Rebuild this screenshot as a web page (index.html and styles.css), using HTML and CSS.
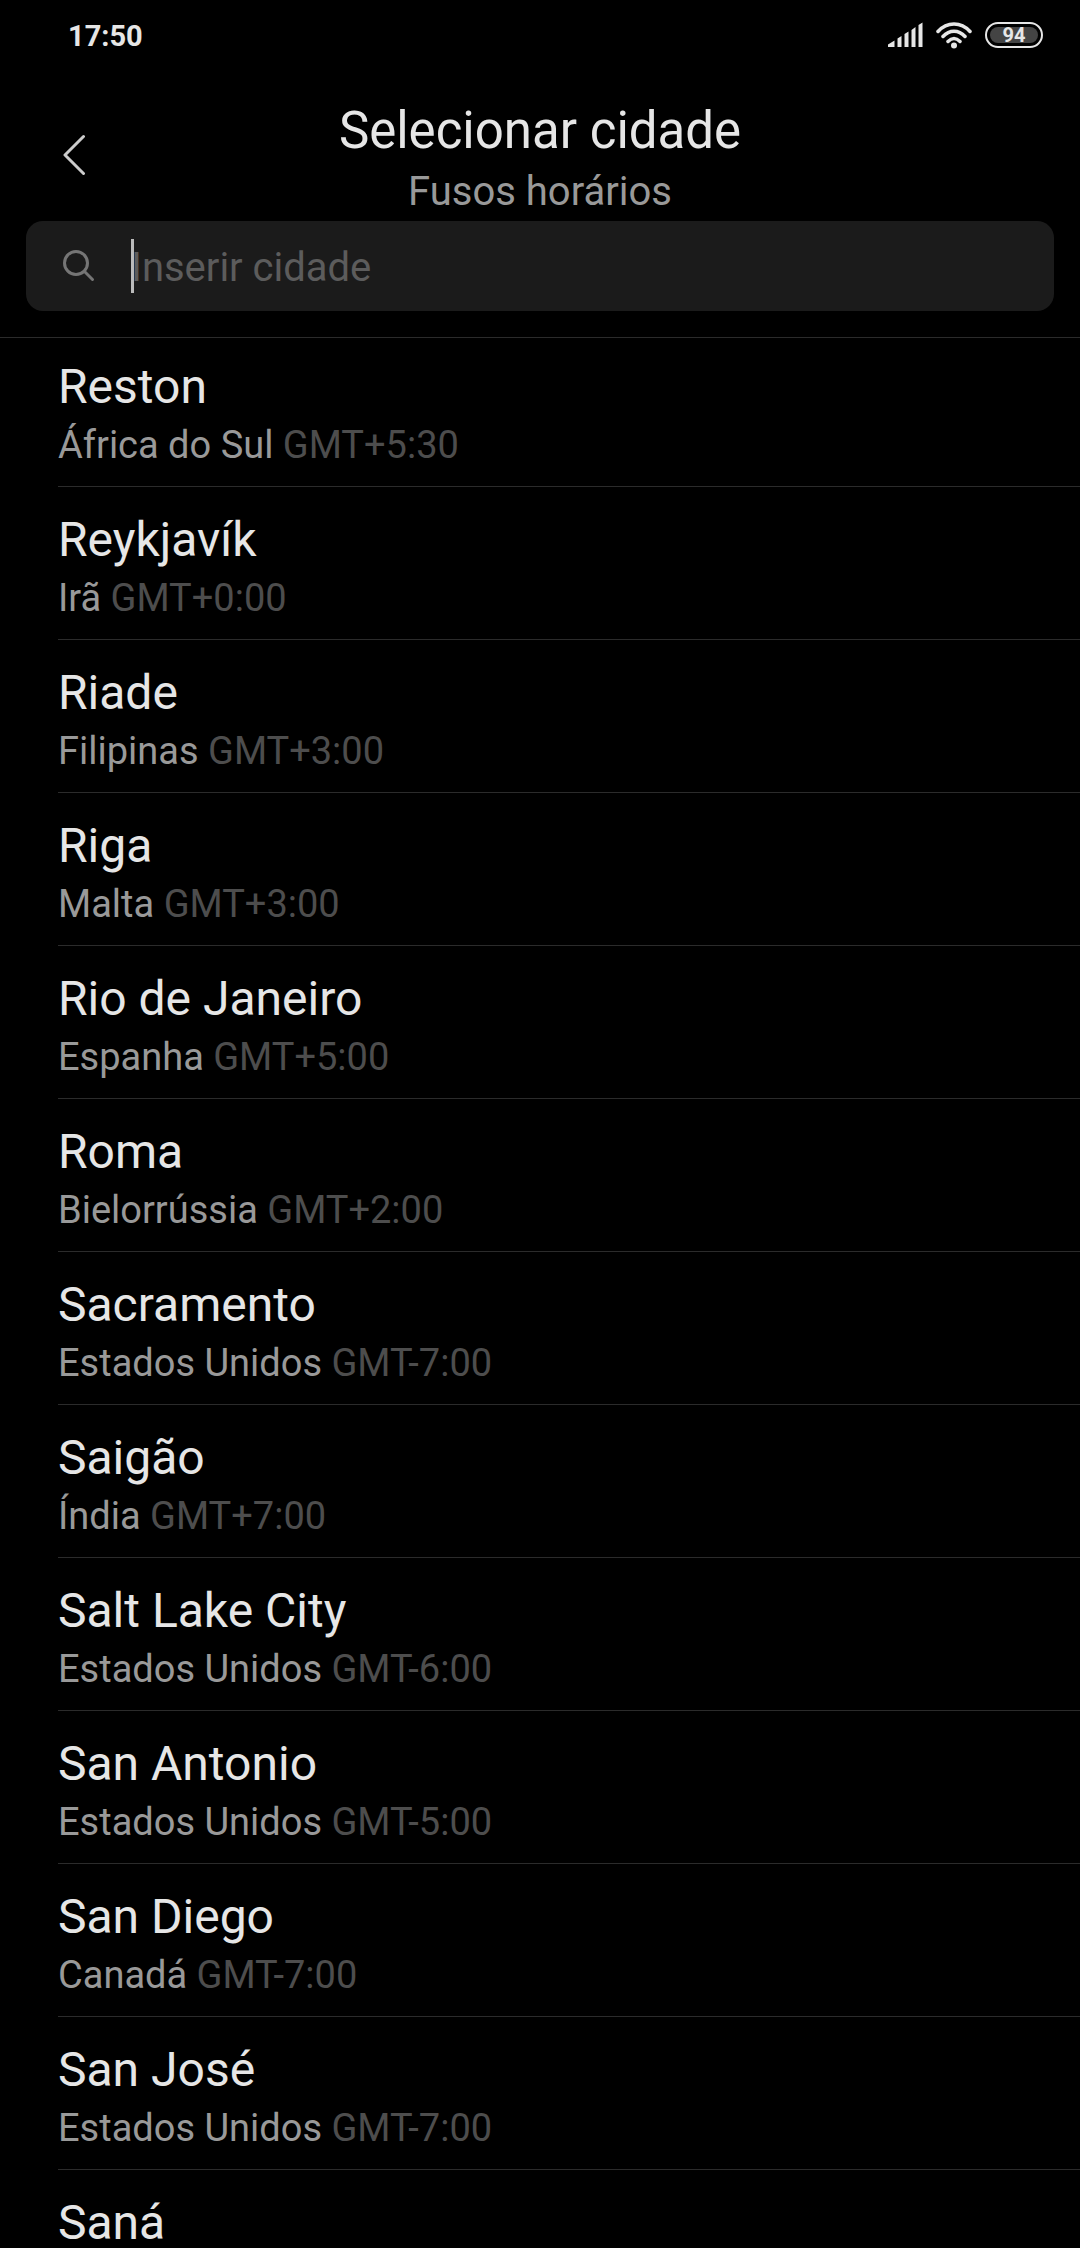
FILE: index.html
```html
<!DOCTYPE html>
<html lang="pt-BR">
<head>
<meta charset="utf-8">
<meta name="viewport" content="width=device-width, initial-scale=1">
<title>Selecionar cidade</title>
<link rel="stylesheet" href="styles.css">
</head>
<body>
<div class="app">
  <div class="status">
    <time class="clock">17:50</time>
    <div class="indicators">
      <svg class="signal" width="35" height="26" viewBox="0 0 35 26" aria-hidden="true"><path d="M0 25v-2.500l6.500-4V25zM9.500 25V16.500l4-2.500V25zM16.500 25V12l4-2.500V25zM23.500 25V8l4-3V25zM30.500 25V3l4-2.500V25z"/></svg>
      <svg class="wifi" width="36" height="27" viewBox="0 0 36 27" aria-hidden="true"><path d="M2 9.500C11-.5 25-.5 34 9.500M7 14.500c6.500-7 15.500-7 22 0M12 19.500c4-4 8-4 12 0"/><circle cx="18" cy="23.500" r="3"/></svg>
      <div class="battery"><span class="charge">94</span></div>
    </div>
  </div>
  <header class="header">
    <div class="bar">
      <button class="back" type="button" aria-label="Voltar">
        <svg width="24" height="42" viewBox="0 0 24 42" aria-hidden="true"><path d="M20.500 2.500L2 21l18.500 18.500"/></svg>
      </button>
      <div class="titles">
        <h1 class="title">Selecionar cidade</h1>
        <p class="subtitle">Fusos horários</p>
      </div>
    </div>
    <div class="search">
      <svg class="lens" width="32" height="32" viewBox="0 0 32 32" aria-hidden="true"><circle cx="13" cy="13" r="11.500"/><path d="M21.500 21.500l8 8"/></svg>
      <div class="field">
        <input class="input" type="text" placeholder="Inserir cidade" aria-label="Inserir cidade">
        <span class="caret"></span>
      </div>
    </div>
  </header>
  <main class="scroller">
    <ul class="cities">
      <li class="city"><h2 class="name">Reston</h2><p class="place">África do Sul <span class="zone">GMT+5:30</span></p></li>
      <li class="city"><h2 class="name">Reykjavík</h2><p class="place">Irã <span class="zone">GMT+0:00</span></p></li>
      <li class="city"><h2 class="name">Riade</h2><p class="place">Filipinas <span class="zone">GMT+3:00</span></p></li>
      <li class="city"><h2 class="name">Riga</h2><p class="place">Malta <span class="zone">GMT+3:00</span></p></li>
      <li class="city"><h2 class="name">Rio de Janeiro</h2><p class="place">Espanha <span class="zone">GMT+5:00</span></p></li>
      <li class="city"><h2 class="name">Roma</h2><p class="place">Bielorrússia <span class="zone">GMT+2:00</span></p></li>
      <li class="city"><h2 class="name">Sacramento</h2><p class="place">Estados Unidos <span class="zone">GMT-7:00</span></p></li>
      <li class="city"><h2 class="name">Saigão</h2><p class="place">Índia <span class="zone">GMT+7:00</span></p></li>
      <li class="city"><h2 class="name">Salt Lake City</h2><p class="place">Estados Unidos <span class="zone">GMT-6:00</span></p></li>
      <li class="city"><h2 class="name">San Antonio</h2><p class="place">Estados Unidos <span class="zone">GMT-5:00</span></p></li>
      <li class="city"><h2 class="name">San Diego</h2><p class="place">Canadá <span class="zone">GMT-7:00</span></p></li>
      <li class="city"><h2 class="name">San José</h2><p class="place">Estados Unidos <span class="zone">GMT-7:00</span></p></li>
      <li class="city"><h2 class="name">Saná</h2></li>
    </ul>
  </main>
</div>
</body>
</html>
```
FILE: styles.css
```css
* {
  box-sizing: border-box;
}

body,
h1,
h2,
p,
ul {
  margin: 0;
  padding: 0;
  font-weight: 400;
}

body {
  background: #000;
  color: #e6e6e6;
  font-family: Roboto, "Liberation Sans", sans-serif;
}

.app {
  display: flex;
  flex-direction: column;
  height: 100vh;
}

.status {
  display: flex;
  align-items: center;
  justify-content: space-between;
  height: 70px;
  padding: 0 37px 0 68px;
}

.clock {
  padding-top: 2px;
  font-size: 29px;
  line-height: 34px;
  font-weight: 700;
}

.indicators {
  display: flex;
  align-items: center;
  gap: 13px;
}

.signal {
  fill: #e6e6e6;
}

.wifi {
  fill: none;
  stroke: #e6e6e6;
  stroke-width: 3.500;
  stroke-linecap: round;
}

.wifi circle {
  fill: #e6e6e6;
  stroke: none;
}

.battery {
  display: flex;
  width: 58px;
  height: 26px;
  padding: 3px;
  border: 2px solid #e6e6e6;
  border-radius: 13px;
}

.charge {
  flex: 1;
  border-radius: 8px;
  background: #444;
  font-size: 20px;
  line-height: 16px;
  font-weight: 700;
  text-align: center;
}

.header {
  border-bottom: 1px solid #2b2b2b;
  padding: 30px 26px 26px;
}

.bar {
  display: grid;
  grid-template-columns: 72px 1fr 72px;
  align-items: start;
}

.back {
  display: flex;
  padding: 34px 0 0 37px;
  border: 0;
  background: none;
}

.back svg {
  flex: none;
  fill: none;
  stroke: #ccc;
  stroke-width: 3;
  stroke-linecap: round;
  stroke-linejoin: round;
}

.titles {
  text-align: center;
}

.title {
  font-size: 51px;
  line-height: 62px;
}

.subtitle {
  padding: 6px 0;
  color: #999;
  font-size: 40px;
  line-height: 47px;
}

.search {
  display: flex;
  align-items: center;
  gap: 36px;
  height: 90px;
  padding: 0 36px 0 37px;
  border-radius: 17px;
  background: #1b1b1b;
}

.lens {
  flex: none;
  fill: none;
  stroke: #757575;
  stroke-width: 3;
  stroke-linecap: round;
}

.field {
  position: relative;
  flex: 1;
}

.input {
  display: block;
  width: 100%;
  padding: 4px 0 0;
  border: 0;
  outline: 0;
  background: none;
  color: #e6e6e6;
  font: 40px/54px Roboto, "Liberation Sans", sans-serif;
}

.input::placeholder {
  color: #5c5c5c;
  opacity: 1;
}

.caret {
  position: absolute;
  top: 2px;
  left: 0;
  width: 3px;
  height: 54px;
  background: #bbb;
}

.scroller {
  flex: 1;
  min-height: 0;
  overflow-y: auto;
  scrollbar-width: none;
}

.cities {
  margin-top: -4px;
  list-style: none;
}

.city {
  min-height: 153px;
  margin-left: 58px;
  padding: 25px 0 18px;
  border-bottom: 1px solid #2b2b2b;
}

.name {
  font-size: 48px;
  line-height: 56px;
}

.place {
  padding-top: 8px;
  color: #999;
  font-size: 38px;
  line-height: 45px;
}

.zone {
  color: #4d4d4d;
}
```
